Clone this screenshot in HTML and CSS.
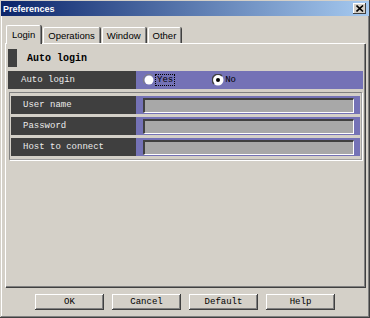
FILE: index.html
```html
<!DOCTYPE html>
<html lang="en">
  <head>
    <meta charset="UTF-8" />
    <title>Preferences</title>
    <link rel="stylesheet" href="styles.css">
  </head>
  <body>
    <div class="window">
      <div class="titlebar">
        <span class="title">Preferences</span>
        <div class="close-btn">
          <svg width="8" height="7" viewBox="0 0 8 7">
            <path d="M0.5 0.5L7 6.5M7 0.5L0.5 6.5" stroke="#000" stroke-width="1.6" />
          </svg>
        </div>
      </div>

      <div class="tabs">
        <div class="tab selected">Login</div>
        <div class="tab">Operations</div>
        <div class="tab">Window</div>
        <div class="tab">Other</div>
      </div>

      <div class="panel">
        <div class="section-header">
          <div class="marker"></div>
          <span>Auto login</span>
        </div>

        <div class="row">
          <div class="label">Auto login</div>
          <div class="value radios">
            <label class="radio">
              <svg width="12" height="12" viewBox="0 0 12 12">
                <path d="M10 2A5 5 0 0 0 2 10" fill="none" stroke="#808080" stroke-width="1" />
                <circle cx="6" cy="6" r="4.5" fill="#fff" />
              </svg>
              <span class="focus">Yes</span>
            </label>
            <label class="radio">
              <svg width="12" height="12" viewBox="0 0 12 12">
                <circle cx="6" cy="6" r="5.5" fill="#fff" />
                <path d="M10 2A5 5 0 0 0 2 10" fill="none" stroke="#404040" stroke-width="1.4" />
                <circle cx="6" cy="6" r="2" fill="#000" />
              </svg>
              <span>No</span>
            </label>
          </div>
        </div>

        <div class="group">
          <div class="row">
            <div class="label">User name</div>
            <div class="value"><div class="field"></div></div>
          </div>
          <div class="row">
            <div class="label">Password</div>
            <div class="value"><div class="field"></div></div>
          </div>
          <div class="row">
            <div class="label">Host to connect</div>
            <div class="value"><div class="field"></div></div>
          </div>
        </div>
      </div>

      <div class="buttons">
        <button>OK</button>
        <button>Cancel</button>
        <button>Default</button>
        <button>Help</button>
      </div>
    </div>
  </body>
</html>
```

FILE: styles.css
```css
body {
  margin: 0;
  background-color: #d4d0c8;
}

.window {
  width: 370px;
  height: 318px;
  box-sizing: border-box;
  padding: 1px;
  background-color: #d4d0c8;
  box-shadow: inset -1px -1px #404040, inset 1px 1px #d4d0c8,
    inset -2px -2px #808080, inset 2px 2px #fff;
  display: flex;
  flex-direction: column;
}

.titlebar {
  height: 15px;
  background: linear-gradient(to right, #0a246a, #a6caf0);
  display: flex;
  align-items: center;
  justify-content: space-between;
  padding: 0 3px 0 2px;
}

.title {
  font-family: "Liberation Sans", sans-serif;
  font-size: 9px;
  font-weight: bold;
  color: #fff;
}

.close-btn {
  width: 13px;
  height: 11px;
  background-color: #d4d0c8;
  box-shadow: inset -1px -1px #404040, inset 1px 1px #fff;
  display: flex;
  align-items: center;
  justify-content: center;
}

.tabs {
  display: flex;
  align-items: flex-end;
  margin: 9px 0 0 5px;
  height: 18px;
  position: relative;
  z-index: 1;
}

.tab {
  font-family: "Liberation Sans", sans-serif;
  font-size: 9.5px;
  color: #000;
  height: 16px;
  line-height: 16px;
  padding: 0 4px;
  margin-right: 2px;
  box-sizing: border-box;
  border-top: 1px solid #fff;
  border-left: 1px solid #fff;
  border-right: 1px solid #808080;
  box-shadow: 1px 0 #404040;
  border-radius: 2px 2px 0 0;
}

.tab.selected {
  height: 19px;
  line-height: 18px;
  padding: 0 5px;
  margin-bottom: -1px;
  background-color: #d4d0c8;
}

.panel {
  height: 244px;
  margin: 0 4px;
  box-sizing: border-box;
  padding: 5px 2px;
  border-top: 1px solid #fff;
  border-left: 1px solid #fff;
  box-shadow: inset -1px -1px #808080, 1px 1px #404040;
}

.section-header {
  height: 18px;
  display: flex;
  align-items: center;
  gap: 10px;
  font-family: "Liberation Mono", monospace;
  font-size: 10px;
  font-weight: bold;
  color: #000;
}

.marker {
  width: 9px;
  height: 18px;
  background-color: #404040;
}

.row {
  display: flex;
  height: 18px;
  margin-top: 4px;
}

.label {
  width: 128px;
  flex-shrink: 0;
  background-color: #3f3f3f;
  color: #ececec;
  font-family: "Liberation Mono", monospace;
  font-size: 9px;
  line-height: 18px;
  padding-left: 13px;
  box-sizing: border-box;
}

.value {
  flex: 1;
  background-color: #7472b6;
  box-sizing: border-box;
  padding: 2px 6px 1px 7px;
}

.radios {
  display: flex;
  align-items: center;
  padding: 0 0 0 7px;
  gap: 38px;
}

.radio {
  display: flex;
  align-items: center;
  gap: 1px;
  font-family: "Liberation Mono", monospace;
  font-size: 9px;
  color: #000;
}

.focus {
  outline: 1px dotted #000;
  padding: 0 1px;
  line-height: 10px;
}

.group {
  margin: 3px 1px 0;
  padding: 0 1px 3px;
  border-top: 1px solid #808080;
  border-left: 1px solid #808080;
  box-shadow: 1px 1px #fff;
  border-right: 1px solid #a0a0a0;
  border-bottom: 1px solid #a0a0a0;
}

.group .label {
  width: 125px;
  padding-left: 12px;
}

.group .row {
  margin-top: 3px;
}

.field {
  height: 15px;
  box-sizing: border-box;
  background-color: #a8a8a8;
  border-top: 2px solid #404040;
  border-left: 2px solid #404040;
  border-right: 1px solid #fff;
  border-bottom: 1px solid #fff;
}

.buttons {
  display: flex;
  justify-content: center;
  gap: 8px;
  margin-top: 7px;
}

button {
  width: 69px;
  height: 16px;
  padding: 0;
  border: none;
  background-color: #d4d0c8;
  box-shadow: inset -1px -1px #404040, inset 1px 1px #fff,
    inset -2px -2px #808080;
  font-family: "Liberation Mono", monospace;
  font-size: 9px;
  color: #000;
}
```
